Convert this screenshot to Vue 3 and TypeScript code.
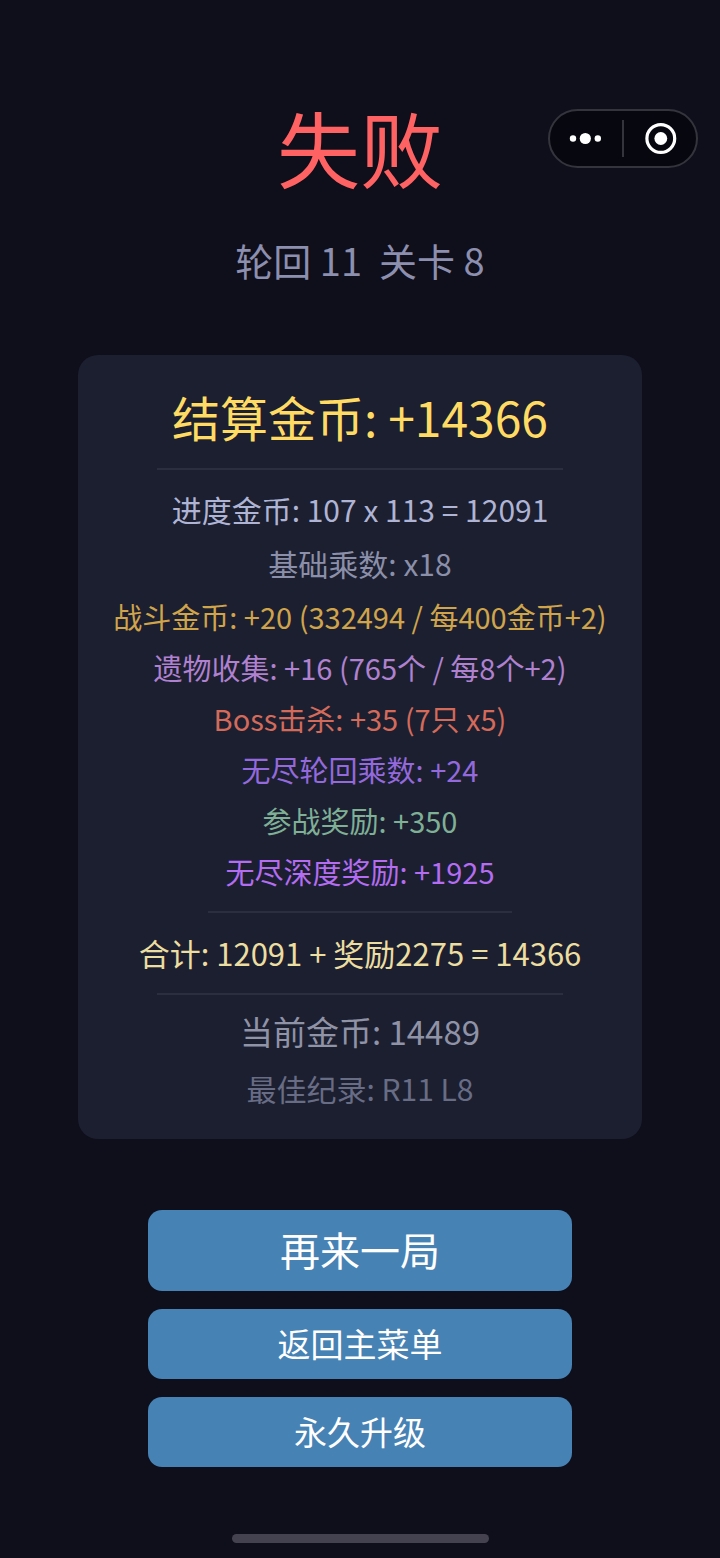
<script setup lang="ts">
interface Line {
  text: string
  tone: string
}

const summary: Line[] = [
  { text: '进度金币: 107 x 113 = 12091', tone: 'progress' },
  { text: '基础乘数: x18', tone: 'base' },
]

const bonuses: Line[] = [
  { text: '战斗金币: +20 (332494 / 每400金币+2)', tone: 'battle' },
  { text: '遗物收集: +16 (765个 / 每8个+2)', tone: 'relic' },
  { text: 'Boss击杀: +35 (7只 x5)', tone: 'boss' },
  { text: '无尽轮回乘数: +24', tone: 'endless' },
  { text: '参战奖励: +350', tone: 'join' },
  { text: '无尽深度奖励: +1925', tone: 'depth' },
]
</script>

<template>
  <div class="page">
    <div class="capsule">
      <button type="button" class="capsule-btn" aria-label="更多">
        <svg width="36" height="36" viewBox="0 0 36 36" fill="#fff">
          <circle cx="5" cy="17.5" r="3.2" />
          <circle cx="17.3" cy="17.5" r="5.6" />
          <circle cx="29.8" cy="17.5" r="3.2" />
        </svg>
      </button>
      <span class="capsule-split"></span>
      <button type="button" class="capsule-btn" aria-label="关闭">
        <svg width="36" height="36" viewBox="0 0 36 36">
          <circle cx="18.8" cy="17.5" r="13.9" fill="none" stroke="#fff" stroke-width="3.2" />
          <circle cx="18.8" cy="17.5" r="6.4" fill="#fff" />
        </svg>
      </button>
    </div>

    <header class="header">
      <h1>失败</h1>
      <p class="stage">轮回 11&nbsp; 关卡 8</p>
    </header>

    <main class="card">
      <h2>结算金币: +14366</h2>
      <hr class="rule" />
      <p v-for="line in summary" :key="line.tone" class="main-line" :class="line.tone">{{ line.text }}</p>
      <p v-for="line in bonuses" :key="line.tone" class="bonus-line" :class="line.tone">{{ line.text }}</p>
      <hr class="rule short" />
      <p class="foot-line total">合计: 12091 + 奖励2275 = 14366</p>
      <hr class="rule" />
      <p class="foot-line current">当前金币: 14489</p>
      <p class="foot-line best">最佳纪录: R11 L8</p>
    </main>

    <nav class="actions">
      <button type="button" class="action primary">再来一局</button>
      <button type="button" class="action">返回主菜单</button>
      <button type="button" class="action">永久升级</button>
    </nav>

    <div class="home-bar"></div>
  </div>
</template>

<style>
body {
  margin: 0;
  background: #0f0e1b;
}
</style>

<style scoped>
.page {
  position: relative;
  box-sizing: border-box;
  min-height: 100vh;
  padding: 86px 0 15px;
  display: flex;
  flex-direction: column;
  align-items: center;
  background: #0f0e1b;
  font-family: "Noto Sans CJK SC", sans-serif;
  text-align: center;
  white-space: nowrap;
}

h1,
h2,
p {
  margin: 0;
  font-weight: 400;
}

.capsule {
  position: absolute;
  top: 109px;
  right: 22px;
  box-sizing: border-box;
  width: 150px;
  height: 59px;
  display: flex;
  align-items: center;
  border: 2px solid #34343c;
  border-radius: 30px;
  background: #07080f;
}

.capsule-btn {
  flex: 1;
  display: flex;
  justify-content: center;
  padding: 0;
  border: 0;
  background: none;
}

.capsule-split {
  width: 2px;
  height: 37px;
  background: #34343c;
}

h1 {
  font-size: 83px;
  line-height: 120px;
  color: #ff6262;
}

.stage {
  margin-top: 28px;
  font-size: 38px;
  line-height: 52px;
  color: #8c8fae;
}

.card {
  box-sizing: border-box;
  width: 78.4%;
  margin-top: 69px;
  padding: 22px 0 23px;
  display: flex;
  flex-direction: column;
  align-items: center;
  border-radius: 20px;
  background: #1b1f30;
}

h2 {
  font-size: 48px;
  line-height: 78px;
  color: #ffdb63;
}

.rule {
  width: 72%;
  height: 2px;
  margin: 13px 0 12px;
  border: 0;
  background: #2a2e3e;
}

.rule.short {
  width: 54%;
  margin: 14px 0 12px;
}

.foot-line + .rule {
  margin: 12px 0 8px;
}

.main-line {
  font-size: 30px;
  line-height: 54px;
}

.main-line + .bonus-line {
  margin-top: 1px;
}

.bonus-line {
  font-size: 29px;
  line-height: 51px;
}

.foot-line {
  font-size: 31px;
  line-height: 56px;
}

.progress { color: #b0b4d4; }
.base { color: #8b8fa9; }
.battle { color: #d0a44a; }
.relic { color: #b081cf; }
.boss { color: #d46a5a; }
.endless { color: #9469dc; }
.join { color: #7fb096; }
.depth { color: #b46cf0; }
.total { color: #ecdda0; }

.current {
  font-size: 33px;
  color: #9092a6;
}

.best {
  margin-top: 1px;
  font-size: 30px;
  color: #686c84;
}

.actions {
  width: 58.8%;
  margin-top: 71px;
  display: flex;
  flex-direction: column;
  gap: 18px;
}

.action {
  height: 70px;
  padding: 0 0 2px;
  border: 0;
  border-radius: 14px;
  background: #4682b4;
  color: #fff;
  font-family: inherit;
  font-size: 33px;
}

.action.primary {
  height: 81px;
  padding-bottom: 4px;
  font-size: 40px;
}

.home-bar {
  width: 257px;
  height: 9px;
  margin-top: auto;
  border-radius: 5px;
  background: #43424e;
}
</style>
